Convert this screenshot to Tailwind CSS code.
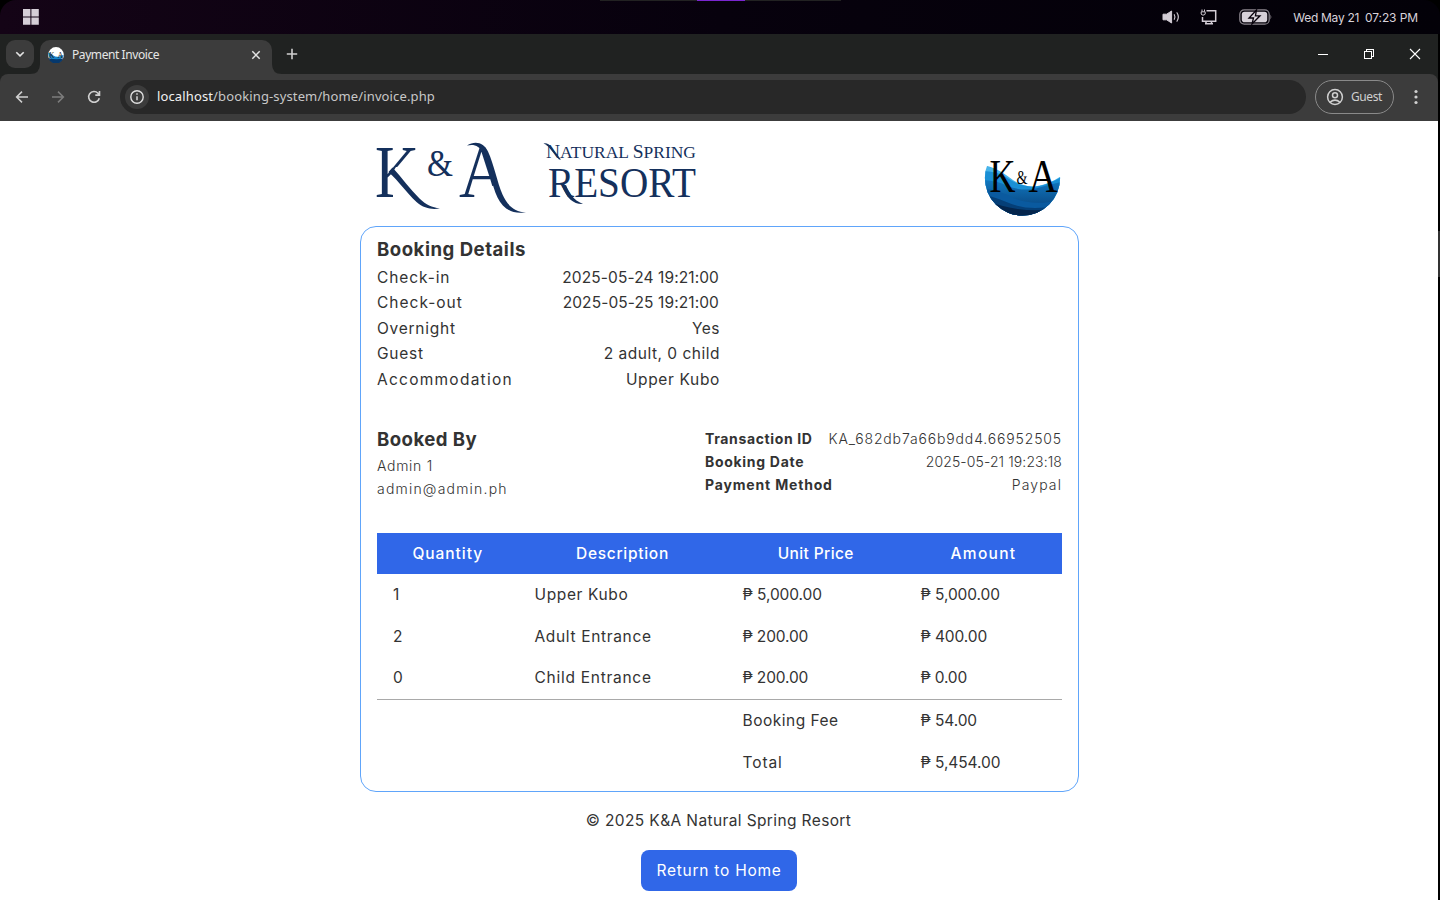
<!DOCTYPE html>
<html lang="en">
<head>
<meta charset="utf-8">
<title>Payment Invoice</title>
<script src="https://cdn.jsdelivr.net/npm/@tailwindcss/browser@4"></script>
</head>
<body class="w-[1440px] h-[900px] overflow-hidden bg-black font-['Inter',sans-serif]">
<!-- System bar -->
<header class="relative h-[34px] flex items-center bg-black">
  <div class="h-full flex-1 rounded-t-2xl bg-linear-to-r from-[#140416] via-[#07010d] to-[#030108] flex items-center pl-[23px] pr-[22px] text-[#d8d2da]">
    <svg class="w-4 h-4" viewBox="0 0 16 16" fill="#d5cfd7"><path d="M0 0h7.4v7.4H0zM8.4 0h7.4v7.4H8.4zM0 8.4h7.4v7.4H0zM8.4 8.4h7.4v7.4H8.4z"/></svg>
    <div class="ml-auto flex items-center">
      <svg class="w-[19px] h-4" viewBox="0 0 19 16" fill="none"><path d="M1 5.2h3.6L9.600 2v12L4.600 10.800H1z" fill="#d3cdd5" stroke="#d3cdd5" stroke-linejoin="round"/><path d="M12.300 5.700q1.300 2.300 0 4.600M15 3.800q2.700 4.200 0 8.400" stroke="#c9c3cb" stroke-width="1.200" stroke-linecap="round"/></svg>
      <svg class="w-[17px] h-4 ml-[19px]" viewBox="0 0 17 16" fill="none" stroke="#d3cdd5"><path d="M6.500 1.700h9.200v10.500H2.500V8" stroke-width="1.500"/><path d="M2 .5v2M4.500 .5v2" /><path d="M1.200 2.800h4v2.200l-1 1H2.200l-1-1z"/><path d="M6 13v1.200M11.500 13v1.200M5 14.700h8" stroke-width="1.600"/></svg>
      <svg class="w-[34px] h-4 ml-[22px]" viewBox="0 0 34 16" fill="none"><rect x=".8" y=".8" width="29.400" height="14.400" rx="4.500" stroke="#8d878f" stroke-width="1.200"/><rect x="2.800" y="2.800" width="25.400" height="10.400" rx="2.800" fill="#d6d0d8"/><path d="M31.500 5.500q1.800 2.500 0 5z" fill="#8d878f"/><path d="M17.500 1l-7.500 8h4.500l-1.500 6 8-8.200h-4.600z" fill="#dcd6de" stroke="#08020c" stroke-width="1.300"/></svg>
      <span class="ml-[20px] text-[12px] tracking-[-0.3px] whitespace-pre mt-[1px]">Wed May 21</span><span class="ml-[6px] text-[12px] tracking-[-0.1px] mt-[1px]">07:23 PM</span>
    </div>
  </div>
  <div class="absolute left-[600px] top-0 w-[241px] h-px bg-[#222] flex justify-center"><div class="w-12 h-px bg-[#7a26d0]"></div></div>
</header>

<div class="flex h-[866px]">
<div class="w-[1438px] flex flex-col bg-white">
  <!-- Tab strip -->
  <div class="h-10 bg-[#202221] flex items-start pl-[6px]">
    <div class="mt-[6px] w-7 h-7 rounded-[9px] bg-[#3c3c3c] flex items-center justify-center"><svg class="w-3 h-3" viewBox="0 0 12 12" fill="none" stroke="#e3e3e3" stroke-width="1.600"><path d="M2.300 4.200L6 7.900l3.700-3.700"/></svg></div>
    <div class="relative ml-[6px] mt-[6px] w-[232px] h-[34px] rounded-t-[10px] bg-[#3c3c3c] flex items-center px-2 pb-[5px]">
      <svg class="absolute -left-[10px] bottom-0 w-[10px] h-[10px]" viewBox="0 0 10 10"><path d="M10 0v10H0Q10 10 10 0" fill="#3c3c3c"/></svg>
      <svg class="absolute -right-[10px] bottom-0 w-[10px] h-[10px]" viewBox="0 0 10 10"><path d="M0 0v10h10Q0 10 0 0" fill="#3c3c3c"/></svg>
      <svg class="w-4 h-4" viewBox="985 140 76 76"><circle cx="1023" cy="178" r="37.500" fill="#fff"/><path d="M986 166q14 3 24 14 12 8 24 6 14-3 26-9a37.500 37.500 0 0 1-74-11" fill="#1683c9"/><path d="M987 192q36 12 71 2a37.500 37.500 0 0 1-71-2" fill="#05386d"/><g font-family="Liberation Serif" fill="#222"><text x="990" y="190" font-size="42" textLength="26" lengthAdjust="spacingAndGlyphs">K</text><text x="1030" y="190" font-size="42" textLength="27" lengthAdjust="spacingAndGlyphs">A</text></g></svg>
      <span class="ml-2 text-[12px] tracking-[-0.42px] font-['Noto_Sans',sans-serif] text-[#e6e6e6]">Payment Invoice</span>
      <svg class="ml-auto mr-[3px] w-[10px] h-[10px]" viewBox="0 0 10 10" stroke="#e3e3e3" stroke-width="1.500"><path d="M1.300 1.300l7.400 7.400M8.700 1.300L1.300 8.700"/></svg>
    </div>
    <svg class="ml-[14px] mt-[14px] w-3 h-3" viewBox="0 0 12 12" stroke="#cfcfcf" stroke-width="1.600"><path d="M6 .8v10.400M.8 6h10.400"/></svg>
    <div class="ml-auto flex items-center h-10 pr-[17px] text-white">
      <svg class="w-[12px] h-[12px]" viewBox="0 0 12 12" stroke="#fff" shape-rendering="crispEdges"><path d="M1 6.500h10"/></svg>
      <svg class="w-[12px] h-[12px] ml-[34px]" viewBox="0 0 12 12" fill="none" stroke="#fff" shape-rendering="crispEdges"><path d="M1.500 3.500h7v7h-7zM3.500 3.500v-2h7v7h-2"/></svg>
      <svg class="w-[12px] h-[12px] ml-[34px]" viewBox="0 0 12 12" stroke="#fff" stroke-width="1.100"><path d="M1 1l10 10M11 1L1 11"/></svg>
    </div>
  </div>
  <!-- Toolbar -->
  <div class="bg-[#202221]"><div class="h-[47px] rounded-t-lg bg-[#3c3c3c] flex items-center pl-[14px] pr-[14px] pb-px">
    <svg class="w-4 h-4" viewBox="0 0 16 16" fill="none" stroke="#d0d0d0" stroke-width="1.500"><path d="M14 8H2.800M8 2.600L2.600 8 8 13.400"/></svg>
    <svg class="w-4 h-4 ml-5" viewBox="0 0 16 16" fill="none" stroke="#7c7c7c" stroke-width="1.500"><path d="M2 8h11.200M8 2.600L13.400 8 8 13.400"/></svg>
    <svg class="w-4 h-4 ml-5" viewBox="0 0 16 16" fill="none" stroke="#d0d0d0" stroke-width="1.600"><path d="M13.300 9.200a5.400 5.400 0 1 1-1.300-5l1.500 1.700M13.500 1.900v4.200H9.300"/></svg>
    <div class="ml-[18px] w-[1186px] h-[34px] rounded-full bg-[#282828] flex items-center pl-[5px]">
      <div class="w-6 h-6 rounded-full bg-[#3c3c3c] flex items-center justify-center"><svg class="w-4 h-4" viewBox="0 0 16 16" fill="none" stroke="#e0e0e0" stroke-width="1.400"><circle cx="8" cy="8" r="6.200"/><path d="M8 7.300v4M8 4.300v1.500"/></svg></div>
      <span class="ml-2 text-[13px] tracking-[0.13px] font-['Noto_Sans',sans-serif] text-[#c7c7c7]"><span class="text-[#f1f1f1]">localhost</span>/booking-system/home/invoice.php</span>
    </div>
    <div class="ml-[9px] w-[79px] h-[34px] rounded-full border border-[#8a8a8a] flex items-center pl-[10px]">
      <svg class="w-[18px] h-[18px]" viewBox="0 0 18 18" fill="none" stroke="#d0d0d0" stroke-width="1.500"><circle cx="9" cy="9" r="7.400"/><circle cx="9" cy="7.200" r="2.500"/><path d="M4 14.300q5-4.300 10 0"/></svg>
      <span class="ml-[7px] text-[12px] tracking-[-0.4px] font-['Noto_Sans',sans-serif] text-[#d0d0d0]">Guest</span>
    </div>
    <svg class="ml-auto w-4 h-4" viewBox="0 0 16 16" fill="#d0d0d0"><circle cx="8" cy="2.500" r="1.600"/><circle cx="8" cy="8" r="1.600"/><circle cx="8" cy="13.500" r="1.600"/></svg>
  </div></div>

  <!-- Page -->
  <main class="ml-[360px] w-[719px] flex flex-col text-[#333] text-[15.5px] leading-[25.6px]">
    <div class="h-[105px] flex justify-between items-start pl-4 pr-[18px]">
      <svg class="w-[324px] h-[76px] mt-[19px] overflow-visible" viewBox="376 140 324 76" font-family="Liberation Serif" fill="#14305c">
        <defs>
          <clipPath id="k"><path d="M370 140h60v26l-34 1 -4 6 1 8v20h-20z"/></clipPath>
          <clipPath id="a"><path d="M455 140h28l10 34v12l-14 0v20h-24z"/></clipPath>
        </defs>
        <text x="375" y="197" font-size="75" textLength="44" lengthAdjust="spacingAndGlyphs" clip-path="url(#k)">K</text>
        <path d="M388.500 172l4-4.500c10 11 17 21 27 31 7 6.500 12 9 20.500 9.800-7 1.500-16 .5-23.500-6.300-10-9.500-17-20-28-30z"/>
        <text x="427" y="175.500" font-size="37" textLength="26" lengthAdjust="spacingAndGlyphs">&amp;</text>
        <text x="459" y="197" font-size="76" textLength="49" lengthAdjust="spacingAndGlyphs" clip-path="url(#a)">A</text>
        <path d="M467 145.500c8-5 17-3 21 6 6 13 9 30 14.500 43 5 11 12 17.500 23.500 17.800-13 2.500-23-3.300-28.500-14.800-6-13-8.500-31-14.500-44-3.500-8-9-9.500-16-8z"/>
        <path d="M543.500 143.500q5-.8 7.500 3.500l10 12.500h-2l-10-12q-2-3-5.500-4" />
        <text x="546" y="157.500" textLength="150" lengthAdjust="spacingAndGlyphs" font-size="17"><tspan font-size="19">N</tspan>ATURAL <tspan font-size="19">S</tspan>PRING</text>
        <text x="548" y="197" font-size="43" textLength="148" lengthAdjust="spacingAndGlyphs">RESORT</text>
        <path d="M562 186l4-1c3 8 7 15 17 19-9 .5-16-5-21-18z"/>
      </svg>
      <svg class="w-[77px] h-[77px] mt-[19px]" viewBox="984.500 140 77 77">
        <defs><clipPath id="c"><circle cx="1023" cy="178" r="37.600"/></clipPath><linearGradient id="g" x2="0" y2="1"><stop stop-color="#1178c0"/><stop offset="1" stop-color="#052f63"/></linearGradient></defs>
        <circle cx="1023" cy="178" r="37.600" fill="#fff"/>
        <g clip-path="url(#c)">
          <path d="M980 164q17 3 28 12 16 13 30 10 12-2 24-10v45h-82z" fill="#47b4ea"/>
          <path d="M980 171q18 0 28 7 16 11 32 8 10-2 22-9v43h-82z" fill="#1a8fd5"/>
          <path d="M980 180q16 0 28 6 17 6 30 2 11-3 24-6v40h-82z" fill="url(#g)"/>
          <path d="M980 188q20 2 34 10 22 9 48 1v22h-82z" fill="#0a5a9f"/>
          <path d="M980 193q18 5 32 11 22 8 50 0v18h-82z" fill="#053f77"/>
          <path d="M980 199q20 7 38 10 20 3 44-1v14h-82z" fill="#04254c"/>
        </g>
        <g font-family="Liberation Serif" fill="#000"><text x="990" y="192" font-size="47" textLength="26" lengthAdjust="spacingAndGlyphs">K</text><text x="1017" y="184" font-size="18" textLength="11" lengthAdjust="spacingAndGlyphs">&amp;</text><text x="1029" y="192" font-size="47" textLength="29" lengthAdjust="spacingAndGlyphs">A</text></g>
      </svg>
    </div>

    <section class="h-[566px] border border-[#60a5fa] rounded-2xl pt-[7px] px-4">
      <h2 class="text-[18.6px] font-bold leading-[30.7px] tracking-[0.5px]">Booking Details</h2>
      <div class="w-[342px]">
        <div class="flex justify-between"><span class="tracking-[0.9px]">Check-in</span><span class="tracking-[0.1px]">2025-05-24 19:21:00</span></div>
        <div class="flex justify-between"><span class="tracking-[1px]">Check-out</span><span class="tracking-[0.1px]">2025-05-25 19:21:00</span></div>
        <div class="flex justify-between"><span class="tracking-[0.75px]">Overnight</span><span class="tracking-[0.5px] -mr-px">Yes</span></div>
        <div class="flex justify-between"><span class="tracking-[0.75px]">Guest</span><span class="tracking-[0.5px] -mr-px">2 adult, 0 child</span></div>
        <div class="flex justify-between"><span class="tracking-[1.25px]">Accommodation</span><span class="tracking-[0.65px] -mr-px">Upper Kubo</span></div>
      </div>
      <div class="mt-[31px] flex justify-between items-start text-[14px] leading-[23.04px]">
        <div>
          <h2 class="text-[18.6px] font-bold leading-[30.7px] tracking-[0.45px]">Booked By</h2>
          <p class="font-light tracking-[0.7px]">Admin 1</p>
          <p class="font-light tracking-[1.2px]">admin@admin.ph</p>
        </div>
        <div class="w-[357px] mt-[3px]">
          <div class="flex justify-between"><b class="tracking-[0.63px]">Transaction ID</b><span class="font-light tracking-[0.85px]">KA_682db7a66b9dd4.66952505</span></div>
          <div class="flex justify-between"><b class="tracking-[0.7px]">Booking Date</b><span class="font-light tracking-[0.1px]">2025-05-21 19:23:18</span></div>
          <div class="flex justify-between"><b class="tracking-[0.83px]">Payment Method</b><span class="font-light tracking-[1.1px]">Paypal</span></div>
        </div>
      </div>
      <div class="mt-[32.500px] h-[41px] bg-[#3067e8] text-white font-medium grid grid-cols-[141.500px_208px_178.500px_157px] items-center text-center">
        <span class="tracking-[0.95px]">Quantity</span><span class="tracking-[0.7px]">Description</span><span class="tracking-[0.4px]">Unit Price</span><span class="tracking-[1.3px]">Amount</span>
      </div>
      <div class="grid grid-cols-[141.500px_208px_178px_157.500px] leading-[41.6px] *:pl-4 border-b border-[#a9a9a9]">
        <span>1</span><span class="tracking-[0.63px]">Upper Kubo</span><span class="tracking-[-0.08px]">₱ 5,000.00</span><span class="tracking-[-0.08px]">₱ 5,000.00</span>
        <span>2</span><span class="tracking-[0.66px]">Adult Entrance</span><span class="tracking-[-0.15px]">₱ 200.00</span><span class="tracking-[-0.1px]">₱ 400.00</span>
        <span>0</span><span class="tracking-[0.73px]">Child Entrance</span><span class="tracking-[-0.15px]">₱ 200.00</span><span class="tracking-[-0.2px]">₱ 0.00</span>
      </div>
      <div class="grid grid-cols-[141.500px_208px_178px_157.500px] leading-[42px] *:pl-4">
        <span></span><span></span><span class="tracking-[0.5px]">Booking Fee</span><span class="tracking-[-0.1px]">₱ 54.00</span>
        <span></span><span></span><span class="tracking-[0.9px]">Total</span><span class="tracking-[-0.08px]">₱ 5,454.00</span>
      </div>
    </section>
    <p class="mt-4 text-center tracking-[0.38px] pr-[2px]">© 2025 K&amp;A Natural Spring Resort</p>
    <a class="mt-[16.400px] ml-[281px] w-[156px] h-[41px] rounded-lg bg-[#3067e8] text-white flex items-center justify-center tracking-[0.75px] whitespace-nowrap">Return to Home</a>
  </main>
</div>
<div class="w-[2px] pt-[197px]"><div class="h-[46px] bg-[#333]"></div></div>
</div>
</body>
</html>
